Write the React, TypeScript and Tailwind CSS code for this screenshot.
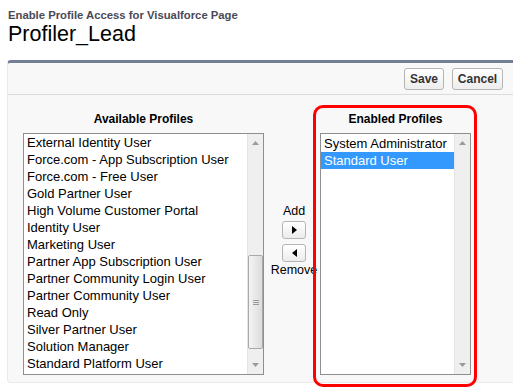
const available = [
  "External Identity User",
  "Force.com - App Subscription User",
  "Force.com - Free User",
  "Gold Partner User",
  "High Volume Customer Portal",
  "Identity User",
  "Marketing User",
  "Partner App Subscription User",
  "Partner Community Login User",
  "Partner Community User",
  "Read Only",
  "Silver Partner User",
  "Solution Manager",
  "Standard Platform User",
];

const enabled = ["System Administrator", "Standard User"];

const UpArrow = () => (
  <svg width="7" height="4" viewBox="0 0 7 4">
    <path d="M0 4 L3.5 0 L7 4 Z" fill="#9a9a9a" />
  </svg>
);

const DownArrow = () => (
  <svg width="7" height="4" viewBox="0 0 7 4">
    <path d="M0 0 L7 0 L3.5 4 Z" fill="#9a9a9a" />
  </svg>
);

const ScrollBar = ({ thumb }: { thumb: boolean }) => (
  <div className="w-[16px] h-full bg-[#efefef] flex flex-col items-center justify-between py-[7px] border-l border-[#e4e4e4]">
    <UpArrow />
    {thumb && (
      <div className="w-[15px] h-[94px] mt-[110px] rounded-[2px] border border-[#a9a9a9] bg-gradient-to-r from-[#f4f4f4] to-[#dcdcdc] flex flex-col items-center justify-center gap-[1px]">
        <div className="w-[6px] h-px bg-[#9a9a9a]" />
        <div className="w-[6px] h-px bg-[#9a9a9a]" />
        <div className="w-[6px] h-px bg-[#9a9a9a]" />
      </div>
    )}
    <div className="flex-1" />
    <DownArrow />
  </div>
);

const MoveButton = ({ dir }: { dir: "right" | "left" }) => (
  <button className="w-[24px] h-[18px] rounded-[3px] border border-[#b5b5b5] bg-gradient-to-b from-white to-[#ececec] flex items-center justify-center">
    <svg width="5" height="8" viewBox="0 0 5 8">
      {dir === "right" ? <path d="M0 0 L5 4 L0 8 Z" fill="#000" /> : <path d="M5 0 L0 4 L5 8 Z" fill="#000" />}
    </svg>
  </button>
);

export default function App() {
  return (
    <div className="w-[513px] h-[391px] overflow-hidden bg-white font-['Liberation_Sans',Arial,sans-serif]">
      <div className="pl-[8px] pt-[8px]">
        <div className="text-[11.3px] leading-[14px] font-bold text-[#4a4a56]">Enable Profile Access for Visualforce Page</div>
        <div className="text-[21.5px] leading-[24px] text-black">Profiler_Lead</div>
      </div>

      <div className="ml-[7px] mt-[14px] w-[520px] bg-[#f8f8f8] border border-[#eaeaea] border-t-[3px] border-t-[#747e96] rounded-tl-[4px] rounded-bl-[4px]">
        <div className="h-[32px] flex items-center justify-end gap-[8px] pr-[23px] border-b border-[#dbdbdb]">
          <button className="h-[22px] w-[40px] rounded-[3px] border border-[#b5b5b5] bg-gradient-to-b from-white to-[#ededed] text-[12px] font-bold text-[#333]">Save</button>
          <button className="h-[22px] w-[51px] rounded-[3px] border border-[#b5b5b5] bg-gradient-to-b from-white to-[#ededed] text-[12px] font-bold text-[#333]">Cancel</button>
        </div>

        <div className="flex items-start pl-[15px] pb-[5px]">
          <div className="w-[241px] pt-[14px] flex flex-col">
            <div className="h-[20px] flex items-center justify-center text-[12px] font-bold text-black">Available Profiles</div>
            <div className="mt-[4px] h-[242px] border border-[#8f8f8f] bg-white flex">
              <div className="flex-1 pl-[3px] text-[13px] text-black">
                {available.map((p) => (
                  <div key={p} className="h-[17px] leading-[17px] whitespace-nowrap">{p}</div>
                ))}
              </div>
              <ScrollBar thumb />
            </div>
          </div>

          <div className="w-[60px] pt-[108px] flex flex-col items-center text-[12.5px] text-black">
            <div className="h-[16px] leading-[16px]">Add</div>
            <div className="mt-[2px]"><MoveButton dir="right" /></div>
            <div className="mt-[5px]"><MoveButton dir="left" /></div>
            <div className="h-[16px] leading-[16px] whitespace-nowrap">Remove</div>
          </div>

          <div className="relative ml-[-11px] mt-[10px] mb-[-10px] w-[164px] border-[3px] border-[#ff0000] rounded-[10px] pt-[1px] pl-[4px] pr-[3px] pb-[9px] flex flex-col">
            <div className="h-[20px] flex items-center justify-center text-[12px] font-bold text-black">Enabled Profiles</div>
            <div className="mt-[4px] h-[242px] border border-[#8f8f8f] bg-white flex">
              <div className="flex-1 pt-[1px] text-[13px] text-black">
                {enabled.map((p, i) => (
                  <div key={p} className={`h-[17px] leading-[17px] pl-[3px] whitespace-nowrap ${i === 1 ? "bg-[#3399ff] text-white" : ""}`}>{p}</div>
                ))}
              </div>
              <ScrollBar thumb={false} />
            </div>
          </div>
        </div>
      </div>
    </div>
  );
}
